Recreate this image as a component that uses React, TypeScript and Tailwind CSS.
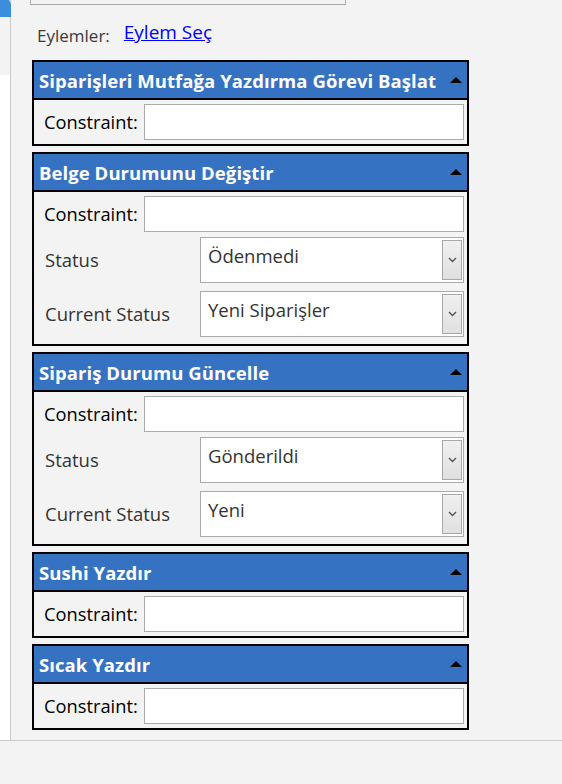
import React from "react";

const font = { fontFamily: '"Open Sans", "Noto Sans", sans-serif' };

function Caret() {
  return (
    <svg width="12" height="6" viewBox="0 0 12 6" className="shrink-0">
      <polygon points="0,6 6,0 12,6" fill="#000" />
    </svg>
  );
}

function Header({ title }: { title: string }) {
  return (
    <div className="h-[38px] bg-[#3672c2] border-b-2 border-black flex items-center justify-between pl-[5px] pr-[5px]">
      <span className="text-white font-bold text-[18.5px] tracking-[0.07px] leading-none whitespace-nowrap mt-[2px]">{title}</span>
      <Caret />
    </div>
  );
}

function ConstraintRow() {
  return (
    <div className="flex items-center h-[36px]">
      <span className="w-[110px] pl-[10px] text-[18.3px] text-black leading-none">Constraint:</span>
      <div className="flex-1 h-[36px] bg-white border border-[#ababab]" />
    </div>
  );
}

function SelectRow({ label, value }: { label: string; value: string }) {
  return (
    <div className="flex items-center h-[46px]">
      <span className="w-[166px] pl-[11px] text-[18.5px] text-[#333] leading-none whitespace-nowrap mt-[1px]">{label}</span>
      <div className="flex-1 h-[46px] bg-white border border-[#ababab] flex justify-between items-stretch p-[1px]">
        <span className="pl-[6px] pt-[5px] text-[18.5px] text-[#333] leading-tight whitespace-nowrap">{value}</span>
        <div className="w-[20px] my-[1px] border border-[#a8a8a8] bg-gradient-to-b from-[#f0f0f0] to-[#e0e0e0] flex items-center justify-center">
          <svg width="9" height="6" viewBox="0 0 9 6">
            <polyline points="1,1 4.5,4.5 8,1" fill="none" stroke="#555" strokeWidth="1.4" />
          </svg>
        </div>
      </div>
    </div>
  );
}

function Panel({ title, selects }: { title: string; selects?: [string, string][] }) {
  return (
    <div className="border-2 border-black w-[437px] bg-[#f3f3f3]">
      <Header title={title} />
      <div className="pt-[4px] pb-[4px] pr-[3px] flex flex-col">
        <ConstraintRow />
        {selects && (
          <div className="flex flex-col gap-[8px] mt-[5px] mb-[3px]">
            {selects.map(([l, v]) => (
              <SelectRow key={l} label={l} value={v} />
            ))}
          </div>
        )}
      </div>
    </div>
  );
}

export default function App() {
  return (
    <div className="w-[562px] h-[784px] bg-[#f3f3f3] flex flex-col overflow-hidden" style={font}>
      <div className="h-[741px] flex border-b border-[#cacaca]">
        <div className="w-[11px] flex flex-col border-r border-[#cacaca]">
          <div className="h-[75px] relative">
            <svg width="11" height="20" viewBox="0 0 11 20" className="absolute left-0 top-0">
              <polygon points="0,0 9,0 11,4 11,17 0,17" fill="#3b8ede" />
            </svg>
          </div>
          <div className="flex-1 bg-white" />
        </div>
        <div className="flex-1 flex flex-col">
          <div className="ml-[19px] w-[316px] h-[5px] border-l border-r border-b border-[#aaaaaa]" />
          <div className="flex items-end h-[41px] ml-[26px]">
            <span className="text-[17px] text-[#3a3a3a] leading-none mb-[2px]">Eylemler:</span>
            <a className="ml-[14px] text-[19px] text-[#0000ff] underline leading-none mb-[4px]">Eylem Seç</a>
          </div>
          <div className="ml-[21px] mt-[14px] flex flex-col gap-[6px]">
            <Panel title="Siparişleri Mutfağa Yazdırma Görevi Başlat" />
            <Panel title="Belge Durumunu Değiştir" selects={[["Status", "Ödenmedi"], ["Current Status", "Yeni Siparişler"]]} />
            <Panel title="Sipariş Durumu Güncelle" selects={[["Status", "Gönderildi"], ["Current Status", "Yeni"]]} />
            <Panel title="Sushi Yazdır" />
            <Panel title="Sıcak Yazdır" />
          </div>
        </div>
      </div>
      <div className="flex-1" />
    </div>
  );
}
